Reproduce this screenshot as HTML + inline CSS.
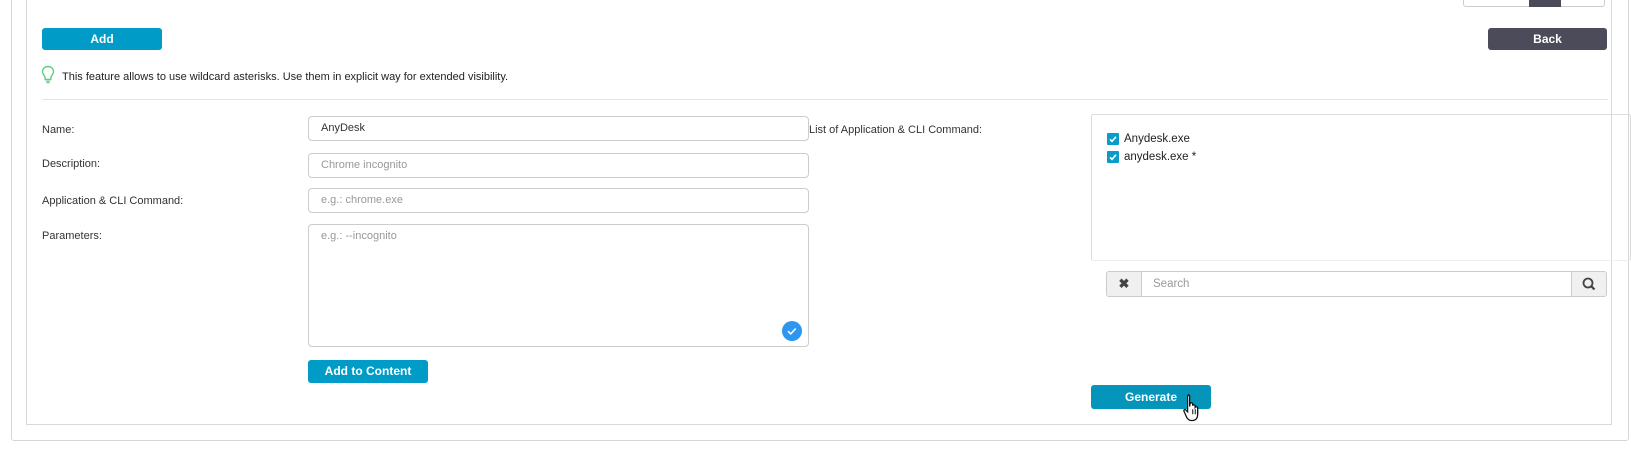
<!DOCTYPE html>
<html><head><meta charset="utf-8"><style>
*{box-sizing:border-box;margin:0;padding:0}
body{width:1631px;height:458px;background:#fff;position:relative;overflow:hidden;font-family:"Liberation Sans",sans-serif;font-size:11px;color:#333}
.a{position:absolute}
.outer{left:11px;top:-5px;width:1618px;height:446px;border:1px solid #d6d6d6;border-radius:3px}
.inner{left:26px;top:-5px;width:1586px;height:430px;border:1px solid #d9d9d9}
.btn{position:absolute;color:#fff;font-size:12px;font-weight:bold;text-align:center;border-radius:3px}
.blue{background:#009bc6}
.lbl{position:absolute;left:42px;font-size:11px;color:#333}
.inp{position:absolute;left:308px;width:501px;border:1px solid #ccc;border-radius:4px;font-size:11px;color:#999;padding-left:12px}
.cb{position:absolute;left:1107px;width:12px;height:12px;background:#0a9bc9;border-radius:1px}
</style></head><body>
<div class="a outer"></div>
<div class="a inner"></div>
<div class="a" style="left:1463px;top:-4px;width:142px;height:11px;border:1px solid #ccc;border-radius:3px"></div>
<div class="a" style="left:1529px;top:-4px;width:32px;height:11px;background:#4a4a58"></div>
<div class="btn blue" style="left:42px;top:28px;width:120px;height:22px;line-height:22px">Add</div>
<div class="btn" style="left:1488px;top:28px;width:119px;height:22px;line-height:22px;background:#4b4b59">Back</div>
<svg class="a" style="left:41px;top:65px" width="14" height="19" viewBox="0 0 14 19"><path d="M7 1.5C3.8 1.5 1.5 3.8 1.5 6.6c0 2.4 1.8 3.6 2.6 5.6v2.3h5.8v-2.3c0.8-2 2.6-3.2 2.6-5.6C12.5 3.8 10.2 1.5 7 1.5z" fill="none" stroke="#5fcf84" stroke-width="1.4"/><path d="M5 16.3h4M5.5 17.8h3" stroke="#5fcf84" stroke-width="1.2"/></svg>
<div class="a" style="left:62px;top:71px;font-size:11px;color:#222">This feature allows to use wildcard asterisks. Use them in explicit way for extended visibility.</div>
<div class="a" style="left:42px;top:99px;width:1566px;height:1px;background:#e3e3e3"></div>
<div class="lbl" style="top:124px">Name:</div>
<div class="lbl" style="top:158px">Description:</div>
<div class="lbl" style="top:195px">Application &amp; CLI Command:</div>
<div class="lbl" style="top:230px">Parameters:</div>
<div class="inp" style="top:116px;height:25px;line-height:23px;color:#333">AnyDesk</div>
<div class="inp" style="top:153px;height:25px;line-height:23px">Chrome incognito</div>
<div class="inp" style="top:188px;height:25px;line-height:23px">e.g.: chrome.exe</div>
<div class="inp" style="top:224px;height:123px;line-height:23px">e.g.: --incognito</div>
<svg class="a" style="left:782px;top:321px" width="20" height="20"><circle cx="10" cy="10" r="10" fill="#2d96f0"/><path d="M6 10.2l2.7 2.7 5-5.4" fill="none" stroke="#fff" stroke-width="1.6"/></svg>
<div class="btn blue" style="left:308px;top:360px;width:120px;height:23px;line-height:23px">Add to Content</div>
<div class="a" style="left:809px;top:124px">List of Application &amp; CLI Command:</div>
<div class="a" style="left:1091px;top:114px;width:540px;height:147px;border:1px solid #ddd;border-bottom-color:#eee;border-radius:2px"></div>
<div class="cb" style="top:133px"><svg width="12" height="12"><path d="M3 6.3l2 2 4-4.5" fill="none" stroke="#fff" stroke-width="1.6"/></svg></div>
<div class="cb" style="top:151px"><svg width="12" height="12"><path d="M3 6.3l2 2 4-4.5" fill="none" stroke="#fff" stroke-width="1.6"/></svg></div>
<div class="a" style="left:1124px;top:133px;font-size:11.5px;color:#222">Anydesk.exe</div>
<div class="a" style="left:1124px;top:151px;font-size:11.5px;color:#222">anydesk.exe *</div>
<div class="a" style="left:1106px;top:271px;width:501px;height:26px;border:1px solid #ccc;border-radius:3px;overflow:hidden">
 <div class="a" style="left:0;top:0;width:35px;height:24px;background:#f0f0f0;border-right:1px solid #ccc;text-align:center;line-height:24px;font-size:13px;font-weight:bold;color:#444">✖</div>
 <div class="a" style="left:46px;top:0;line-height:24px;color:#999;font-size:11.5px">Search</div>
 <div class="a" style="right:0;top:0;width:35px;height:24px;background:#f0f0f0;border-left:1px solid #ccc">
  <svg width="35" height="24"><circle cx="16" cy="11" r="4.5" fill="none" stroke="#444" stroke-width="1.8"/><path d="M19.2 14.2l3.3 3.3" stroke="#444" stroke-width="2.2"/></svg></div>
</div>
<div class="btn" style="left:1091px;top:385px;width:120px;height:24px;line-height:24px;background:#0595bb">Generate</div>
<svg class="a" style="left:1183px;top:393px" width="20" height="30" viewBox="0 0 16 24"><path d="M4 1.5c.8 0 1.3.6 1.3 1.3v8l.4-2.5c.6-.8 2 -.5 2 .6v1.2c.4-.9 2-.7 2 .4v1c.5-.8 2-.6 2 .5v5.5c0 2.5-1.6 4.5-4 4.5H6.5c-1.6 0-2.5-1-3.4-2.2L.8 14.6c-.5-.8.5-1.8 1.3-1.1l1.6 1.5V2.8c0-.7.5-1.300 1.3-1.3z" fill="#fff" stroke="#111" stroke-width="1"/><path d="M7.8 13v4M9.8 13v4M11.8 13v4" stroke="#111" stroke-width=".8"/></svg>
</body></html>
